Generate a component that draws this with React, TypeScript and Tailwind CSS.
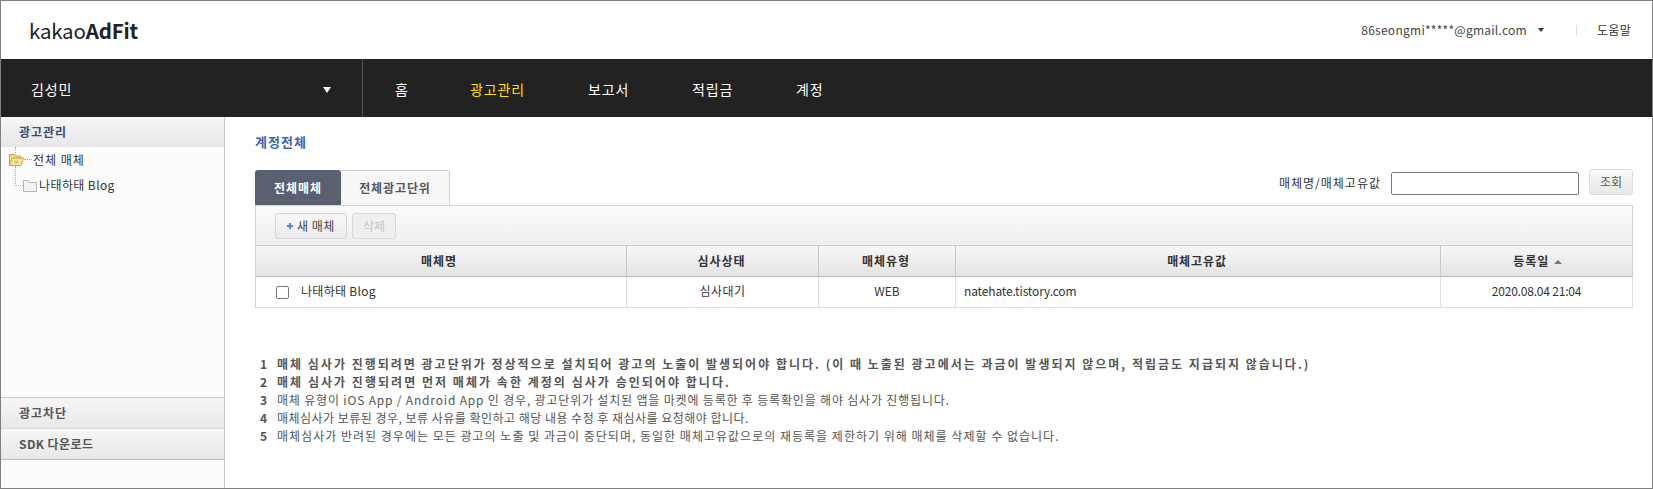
import React from "react";

const notes = [
  { text: "매체 심사가 진행되려면 광고단위가 정상적으로 설치되어 광고의 노출이 발생되어야 합니다. (이 때 노출된 광고에서는 과금이 발생되지 않으며, 적립금도 지급되지 않습니다.)", cls: "font-bold tracking-[2px]" },
  { text: "매체 심사가 진행되려면 먼저 매체가 속한 계정의 심사가 승인되어야 합니다.", cls: "font-bold tracking-[2.03px]" },
  { text: "매체 유형이 iOS App / Android App 인 경우, 광고단위가 설치된 앱을 마켓에 등록한 후 등록확인을 해야 심사가 진행됩니다.", cls: "tracking-[0.82px]" },
  { text: "매체심사가 보류된 경우, 보류 사유를 확인하고 해당 내용 수정 후 재심사를 요청해야 합니다.", cls: "tracking-[0.48px]" },
  { text: "매체심사가 반려된 경우에는 모든 광고의 노출 및 과금이 중단되며, 동일한 매체고유값으로의 재등록을 제한하기 위해 매체를 삭제할 수 없습니다.", cls: "tracking-[1.01px]" },
];

function OpenFolder() {
  return (
    <svg width="15" height="13" viewBox="0 0 15 13" className="shrink-0">
      <path d="M0.5 12.5V1.5h5l1 1.5h5v2" fill="#f7dc8e" stroke="#c9a24a" />
      <path d="M0.5 12.5l2.5-7.5h11.5l-2.5 7.5z" fill="#fbe39c" stroke="#c9a24a" />
      <path d="M5 8h4v2H5z" fill="#e4bb5e" />
    </svg>
  );
}

function ClosedFolder() {
  return (
    <svg width="14" height="12" viewBox="0 0 14 12" className="shrink-0">
      <path d="M0.5 0.5h5l1 2h7v9H0.5z" fill="#f3f3f3" stroke="#b5b5b5" />
    </svg>
  );
}

function Sidebar() {
  return (
    <aside className="flex w-[224px] shrink-0 flex-col border-r border-[#c8c8c8] bg-[#fcfcfc]">
      <div className="flex h-[30px] items-center bg-gradient-to-b from-[#f6f6f6] to-[#e6e6e6] pl-[18px] text-[12px] font-bold tracking-[1px] text-[#3d4a70]">
        광고관리
      </div>
      <div className="flex-1 pl-[8px] text-[12px] text-[#333]">
        <div className="ml-[6px] h-[6px] border-l border-dotted border-[#aaa]" />
        <div className="flex h-[13px] items-center">
          <OpenFolder />
          <span className="w-[8px] border-t border-dotted border-[#aaa]" />
          <span className="ml-[1px] tracking-[1px]">전체 매체</span>
        </div>
        <div className="flex items-start pl-[6px]">
          <span className="h-[20px] w-[8px] border-b border-l border-dotted border-[#aaa]" />
          <div className="mt-[14px] flex h-[12px] items-center">
            <ClosedFolder />
            <span className="mb-[2px] ml-[2px] tracking-[0.4px]">나태하태 Blog</span>
          </div>
        </div>
      </div>
      <div className="flex h-[31px] items-center border-t border-[#c8c8c8] bg-gradient-to-b from-[#f6f6f6] to-[#e8e8e8] pl-[18px] text-[12px] font-bold tracking-[1px] text-[#555]">
        광고차단
      </div>
      <div className="flex h-[32px] items-center border-y border-t-[#d8d8d8] border-b-[#bbb] bg-gradient-to-b from-[#f6f6f6] to-[#e8e8e8] pl-[18px] text-[12px] font-bold tracking-[0.4px] text-[#555]">
        SDK 다운로드
      </div>
      <div className="h-[28px] shrink-0" />
    </aside>
  );
}

function Th({ children, className = "" }: { children: React.ReactNode; className?: string }) {
  return (
    <th className={`border-r border-b border-r-[#c8c8c8] border-b-[#bdbdbd] bg-gradient-to-b from-[#f7f7f7] to-[#e4e4e4] text-center text-[12px] font-bold tracking-[0.9px] text-[#333] ${className}`}>
      {children}
    </th>
  );
}

export default function App() {
  return (
    <div
      className="flex h-[489px] w-[1653px] flex-col overflow-hidden border border-[#808080] bg-white"
      style={{ fontFamily: '"Noto Sans CJK KR", "Noto Sans", sans-serif' }}
    >
      <header className="flex h-[58px] shrink-0 items-center justify-between pl-[28px] pr-[21px]">
        <div className="text-[20.5px] leading-none tracking-[-0.2px] text-[#222]">
          kakao<span className="font-bold">AdFit</span>
        </div>
        <div className="flex items-center text-[12px] text-[#444]">
          <span className="tracking-[0.26px]">86seongmi*****@gmail.com</span>
          <span className="ml-[11px] h-0 w-0 border-x-[3.5px] border-t-[4px] border-x-transparent border-t-[#333]" />
          <span className="ml-[32px] h-[10px] border-l border-[#ddd]" />
          <span className="ml-[20px] tracking-[0.3px] text-[#333]">도움말</span>
        </div>
      </header>

      <nav className="flex h-[58px] shrink-0 items-stretch bg-[#222] text-[14px] tracking-[0.9px] text-white">
        <div className="flex w-[362px] shrink-0 items-center justify-between border-r border-[#555] pl-[30px] pr-[31px] pt-[3px]">
          <span>김성민</span>
          <span className="h-0 w-0 border-x-[4.5px] border-t-[6px] border-x-transparent border-t-white" />
        </div>
        <div className="flex items-center pl-[32px] pt-[3px]">
          <a className="w-[75px]">홈</a>
          <a className="w-[118px] text-[#ffdf00]">광고관리</a>
          <a className="w-[104px]">보고서</a>
          <a className="w-[104px]">적립금</a>
          <a>계정</a>
        </div>
      </nav>

      <div className="flex min-h-0 flex-1">
        <Sidebar />
        <main className="flex-1 pl-[30px] pr-[19px] pt-[16px]">
          <h1 className="text-[13px] leading-[18px] font-bold tracking-[1px] text-[#3e64b6]">계정전체</h1>

          <div className="mt-[19px] flex items-start justify-between">
            <div className="flex h-[35px] items-stretch text-[12px] font-bold tracking-[0.9px]">
              <div className="flex w-[86px] items-center justify-center rounded-t-[3px] bg-[#5a6070] text-white">전체매체</div>
              <div className="flex w-[109px] items-center justify-center rounded-tr-[3px] border-t border-r border-[#d0d0d0] bg-[#f7f7f7] text-[#555]">전체광고단위</div>
            </div>
            <div className="flex items-center text-[12px] text-[#333]">
              <span className="tracking-[1px]">매체명/매체고유값</span>
              <input className="ml-[10px] h-[23px] w-[188px] rounded-[2px] border border-[#777] bg-white" />
              <button className="ml-[10px] h-[26px] w-[44px] -translate-y-[1px] rounded-[3px] border border-[#ddd] bg-gradient-to-b from-[#f8f8f8] to-[#e8e8e8] text-[12px] text-[#555]">조회</button>
            </div>
          </div>

          <div className="flex h-[40px] items-center gap-[5px] border-x border-t border-[#d4d4d4] bg-gradient-to-b from-[#fafafa] to-[#efefef] pl-[19px]">
            <button className="flex h-[26px] w-[72px] items-center justify-center gap-[4px] rounded-[3px] border border-[#d4d4d4] bg-gradient-to-b from-[#f8f8f8] to-[#ebebeb] text-[12px] tracking-[0.5px] text-[#444]">
              <svg width="6" height="6" viewBox="0 0 6 6" className="shrink-0">
                <path d="M2 0h2v2h2v2H4v2H2V4H0V2h2z" fill="#4a8ae8" />
              </svg>
              새 매체
            </button>
            <button className="h-[26px] w-[44px] rounded-[3px] border border-[#d8d8d8] bg-[#f0f0f0] text-[12px] text-[#c4c4c4]">삭제</button>
          </div>

          <table className="w-full table-fixed border-separate border-spacing-0 border-t border-l border-[#d0d0d0] text-[12px]">
            <colgroup>
              <col className="w-[371px]" />
              <col className="w-[192px]" />
              <col className="w-[137px]" />
              <col className="w-[485px]" />
              <col />
            </colgroup>
            <thead>
              <tr className="h-[31px]">
                <Th className="pr-[4px]">매체명</Th>
                <Th className="pr-[2px]">심사상태</Th>
                <Th className="pr-[2px]">매체유형</Th>
                <Th className="pr-[2px]">매체고유값</Th>
                <Th className="border-r-[#d0d0d0] pl-[2px]">
                  등록일 <span className="ml-[1px] inline-block h-0 w-0 -translate-y-[2px] border-x-[4px] border-b-[4px] border-x-transparent border-b-[#777]" />
                </Th>
              </tr>
            </thead>
            <tbody>
              <tr className="h-[31px] text-[#333] [&>td]:border-r [&>td]:border-b [&>td]:border-[#e0e0e0] [&>td]:pb-[2px]">
                <td className="pl-[20px]">
                  <div className="flex items-center tracking-[0.3px]">
                    <span className="mt-[2px] h-[13px] w-[13px] rounded-[2px] border border-[#777] bg-white" />
                    <span className="ml-[12px]">나태하태 Blog</span>
                  </div>
                </td>
                <td className="text-center tracking-[0.5px]">심사대기</td>
                <td className="text-center">WEB</td>
                <td className="pl-[8px] tracking-[-0.15px]">natehate.tistory.com</td>
                <td className="text-center tracking-[-0.2px]">2020.08.04 21:04</td>
              </tr>
            </tbody>
          </table>

          <ol className="mt-[47px] pl-[5px] text-[12px] leading-[18px] text-[#555]">
            {notes.map((note, i) => (
              <li key={i} className={`flex ${note.cls}`}>
                <span className="w-[17px] shrink-0 font-bold tracking-normal">{i + 1}</span>
                <span>{note.text}</span>
              </li>
            ))}
          </ol>
        </main>
      </div>
    </div>
  );
}
